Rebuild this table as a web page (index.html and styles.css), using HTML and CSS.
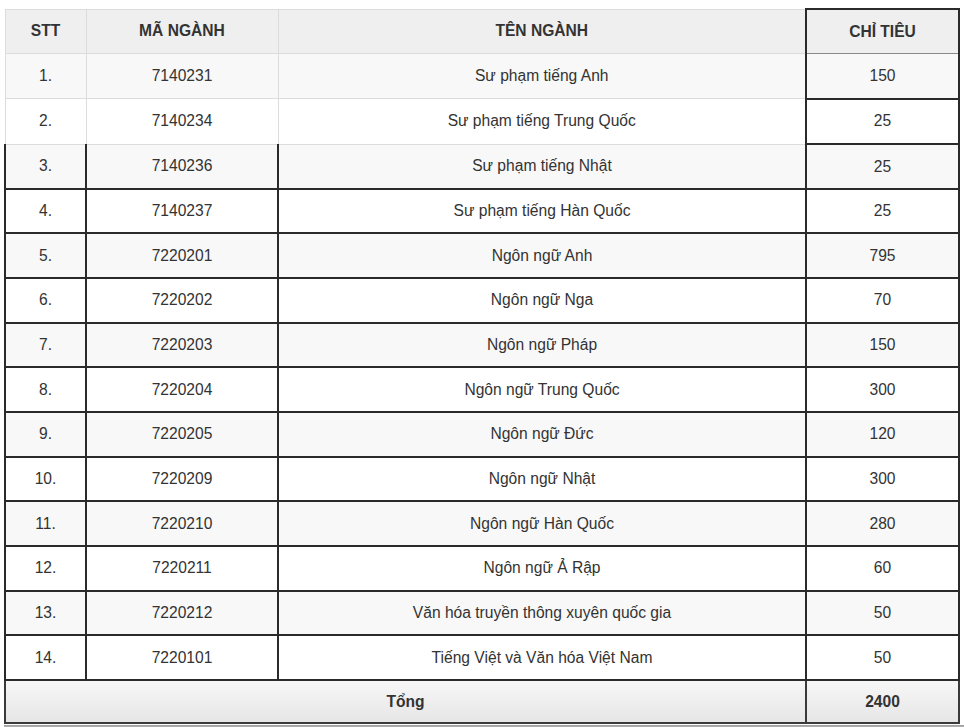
FILE: index.html
```html
<!DOCTYPE html>
<html lang="vi">
<head>
<meta charset="utf-8">
<title>Chỉ tiêu tuyển sinh</title>
<link rel="stylesheet" href="styles.css">
</head>
<body>
<div class="wrap">
<table class="tbl">
  <colgroup>
    <col class="c1"><col class="c2"><col class="c3"><col class="c4">
  </colgroup>
  <thead>
    <tr>
      <th>STT</th>
      <th>MÃ NGÀNH</th>
      <th>TÊN NGÀNH</th>
      <th class="ct">CHỈ TIÊU</th>
    </tr>
  </thead>
  <tbody>
    <tr class="odd"><td>1.</td><td>7140231</td><td>Sư phạm tiếng Anh</td><td class="ct">150</td></tr>
    <tr><td>2.</td><td>7140234</td><td>Sư phạm tiếng Trung Quốc</td><td class="ct">25</td></tr>
    <tr class="odd dk first"><td>3.</td><td>7140236</td><td>Sư phạm tiếng Nhật</td><td class="ct">25</td></tr>
    <tr class="dk"><td>4.</td><td>7140237</td><td>Sư phạm tiếng Hàn Quốc</td><td class="ct">25</td></tr>
    <tr class="odd dk"><td>5.</td><td>7220201</td><td>Ngôn ngữ Anh</td><td class="ct">795</td></tr>
    <tr class="dk"><td>6.</td><td>7220202</td><td>Ngôn ngữ Nga</td><td class="ct">70</td></tr>
    <tr class="odd dk"><td>7.</td><td>7220203</td><td>Ngôn ngữ Pháp</td><td class="ct">150</td></tr>
    <tr class="dk"><td>8.</td><td>7220204</td><td>Ngôn ngữ Trung Quốc</td><td class="ct">300</td></tr>
    <tr class="odd dk"><td>9.</td><td>7220205</td><td>Ngôn ngữ Đức</td><td class="ct">120</td></tr>
    <tr class="dk"><td>10.</td><td>7220209</td><td>Ngôn ngữ Nhật</td><td class="ct">300</td></tr>
    <tr class="odd dk"><td>11.</td><td>7220210</td><td>Ngôn ngữ Hàn Quốc</td><td class="ct">280</td></tr>
    <tr class="dk"><td>12.</td><td>7220211</td><td>Ngôn ngữ Ả Rập</td><td class="ct">60</td></tr>
    <tr class="odd dk"><td>13.</td><td>7220212</td><td>Văn hóa truyền thông xuyên quốc gia</td><td class="ct">50</td></tr>
    <tr class="dk"><td>14.</td><td>7220101</td><td>Tiếng Việt và Văn hóa Việt Nam</td><td class="ct">50</td></tr>
  </tbody>
  <tfoot>
    <tr class="total dk"><td colspan="3">Tổng</td><td class="ct">2400</td></tr>
  </tfoot>
</table>
<div class="bottom-strip"></div>
</div>
</body>
</html>
```

FILE: styles.css
```css
html, body {
  margin: 0;
  padding: 0;
  background: #ffffff;
}
body {
  font-family: "Liberation Sans", Arial, sans-serif;
  color: #333333;
  overflow: hidden;
}
.wrap {
  padding: 8px 0 0 4px;
}
.tbl {
  border-collapse: collapse;
  width: 954px;
  table-layout: fixed;
  font-size: 15.6px;
}
.c1 { width: 81px; }
.c2 { width: 192px; }
.c3 { width: 528px; }
.c4 { width: 153px; }

.tbl th,
.tbl td {
  border: 1px solid #dcdcdc;
  text-align: center;
  vertical-align: middle;
  padding: 0;
  height: 43.6px;
}
.tbl th {
  background: #efefef;
  font-weight: bold;
  color: #333333;
  height: 43px;
}
.tbl tbody tr { background: #ffffff; }
.tbl tbody tr.odd { background: #f8f8f8; }

.tbl tr.dk td {
  border: 2px solid #2a2a2a;
  height: 42.65px;
}
.tbl tr.first td {
  border-top: 1px solid #dcdcdc;
}
.tbl tr.first td.ct {
  border-top: 2px solid #2a2a2a;
}
.tbl .ct {
  border: 2px solid #2a2a2a;
}
.tbl th.ct {
  border-bottom: 1px solid #8a8a8a;
}
.tbl tbody tr:first-child td.ct {
  border-top: 1px solid #8a8a8a;
}
.tbl tr.total td {
  background: linear-gradient(#f7f7f7, #e6e6e6);
  font-weight: bold;
  color: #333333;
  height: 41.6px;
  border-color: #3a3a3a;
}
.bottom-strip {
  height: 4px;
  margin-top: 1px;
  background: linear-gradient(#9a9a9a, #d0d0d0);
}
```
